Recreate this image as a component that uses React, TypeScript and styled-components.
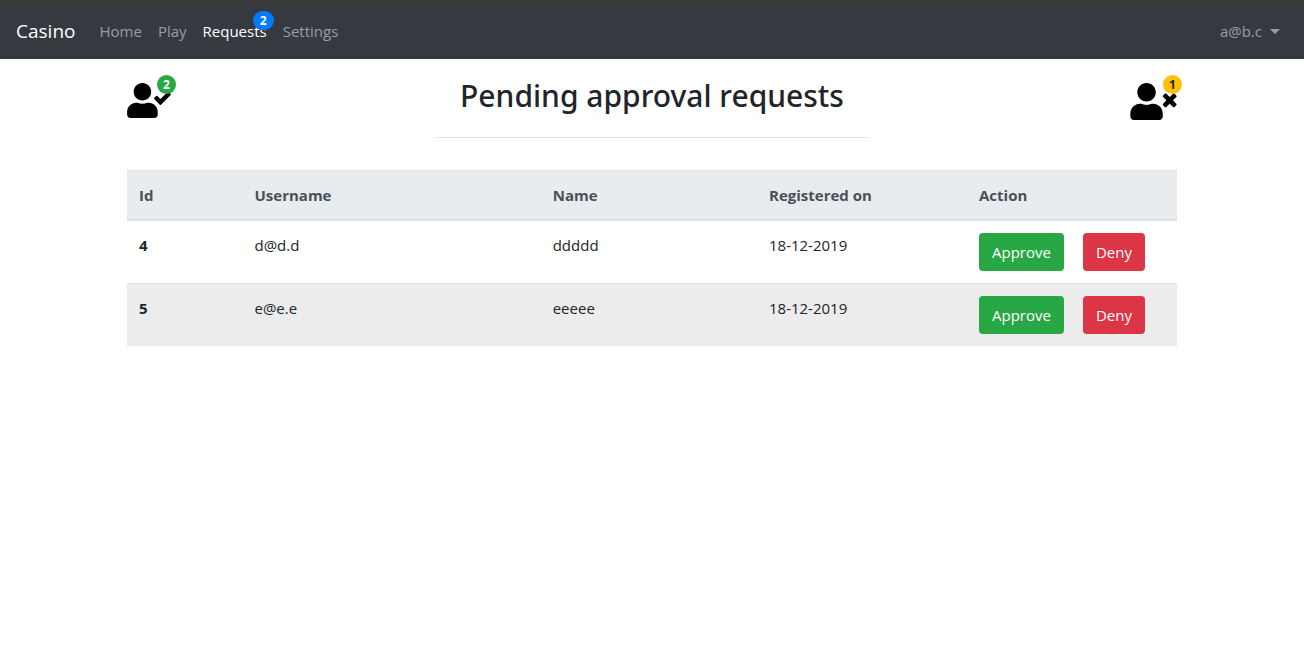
import React from "react";
import styled, { createGlobalStyle, css } from "styled-components";
import { FaUserCheck, FaUserTimes } from "react-icons/fa";

const GlobalStyle = createGlobalStyle`
  *, *::before, *::after { box-sizing: border-box; }
  body {
    margin: 0;
    background: #fff;
    color: #212529;
    font-family: "Open Sans", "Noto Sans", sans-serif;
    font-size: 15px;
    line-height: 24px;
  }
`;

const Navbar = styled.nav`
  display: flex;
  align-items: center;
  padding: 8px 24px 9px 16px;
  min-height: 59px;
  border-top: 4px solid #3a3a38;
  background: #343a40;
`;

const Brand = styled.a`
  margin-right: 24px;
  color: #fff;
  font-size: 19px;
  line-height: 30px;
  text-decoration: none;
`;

const NavList = styled.ul`
  display: flex;
  flex: 1;
  gap: 16px;
  margin: 0;
  padding: 0;
  list-style: none;
`;

const NavLink = styled.a<{ $active?: boolean }>`
  position: relative;
  color: ${(p) => (p.$active ? "#fff" : "rgba(255, 255, 255, 0.5)")};
  text-decoration: none;
`;

const tones = {
  primary: css`background: #007bff; color: #fff;`,
  success: css`background: #28a745; color: #fff;`,
  warning: css`background: #ffc107; color: #212529;`,
  danger: css`background: #dc3545; color: #fff;`,
};
type Tone = keyof typeof tones;

const Badge = styled.span<{ $tone: Tone; $wide?: boolean }>`
  position: absolute;
  top: ${(p) => (p.$wide ? "-10px" : "-8px")};
  right: ${(p) => (p.$wide ? "-7px" : "-5px")};
  width: ${(p) => (p.$wide ? "21px" : "19px")};
  height: 19px;
  border-radius: 10px;
  font-size: 12px;
  font-weight: 700;
  line-height: 19px;
  text-align: center;
  ${(p) => tones[p.$tone]}
`;

const AccountButton = styled.button`
  display: flex;
  align-items: center;
  gap: 8px;
  padding: 0;
  border: 0;
  background: none;
  color: rgba(255, 255, 255, 0.5);
  font: inherit;
`;

const Caret = styled.span`
  border-top: 5px solid;
  border-right: 5px solid transparent;
  border-left: 5px solid transparent;
`;

const Page = styled.main`
  max-width: 1082px;
  margin: 0 auto;
  padding: 16px;
`;

const PageHeader = styled.header`
  display: grid;
  grid-template-columns: 1fr minmax(auto, 432px) 1fr;
  margin-bottom: 32px;
`;

const Title = styled.h1`
  margin: 0;
  padding: 2px 0 22px;
  border-bottom: 1px solid #e5e5e5;
  font-family: "Noto Sans", "Open Sans", sans-serif;
  font-size: 30px;
  font-weight: 500;
  line-height: 38px;
  text-align: center;
`;

const IconLink = styled.a<{ $width: number; $height: number; $end?: boolean }>`
  position: relative;
  display: flex;
  justify-self: ${(p) => (p.$end ? "end" : "start")};
  align-self: start;
  margin-top: 8px;
  color: #000;

  svg {
    width: ${(p) => p.$width}px;
    height: ${(p) => p.$height}px;
  }
`;

const Table = styled.table`
  width: 100%;
  border-spacing: 0;
  table-layout: fixed;
`;

const HeadCell = styled.th<{ $width: string }>`
  width: ${(p) => p.$width};
  padding: 12px;
  border-top: 1px solid #dee2e6;
  border-bottom: 2px solid #dee2e6;
  background: #e9ecef;
  color: #495057;
  font-weight: 700;
  text-align: left;
`;

const Row = styled.tr`
  &:nth-child(even) { background: #ececec; }
  & + & > * { border-top: 1px solid #dee2e6; }
`;

const cell = css`
  padding: 12px;
  text-align: left;
  vertical-align: top;
`;
const Cell = styled.td`${cell}`;
const RowHead = styled.th`${cell} font-weight: 700;`;

const Actions = styled.div`
  display: flex;
  gap: 19px;
`;

const Button = styled.button<{ $tone: Tone }>`
  height: 38px;
  padding: 0 13px;
  border: 0;
  border-radius: 4px;
  font: inherit;
  ${(p) => tones[p.$tone]}
`;

const columns = [
  { label: "Id", width: "11%" },
  { label: "Username", width: "28.4%" },
  { label: "Name", width: "20.6%" },
  { label: "Registered on", width: "20%" },
  { label: "Action", width: "20%" },
];

const requests = [
  { id: 4, username: "d@d.d", name: "ddddd", registered: "18-12-2019" },
  { id: 5, username: "e@e.e", name: "eeeee", registered: "18-12-2019" },
];

export default function App() {
  return (
    <>
      <GlobalStyle />
      <Navbar>
        <Brand href="#">Casino</Brand>
        <NavList>
          <li><NavLink href="#home">Home</NavLink></li>
          <li><NavLink href="#play">Play</NavLink></li>
          <li>
            <NavLink href="#requests" $active>
              Requests
              <Badge $tone="primary" $wide>2</Badge>
            </NavLink>
          </li>
          <li><NavLink href="#settings">Settings</NavLink></li>
        </NavList>
        <AccountButton type="button">
          a@b.c
          <Caret />
        </AccountButton>
      </Navbar>
      <Page>
        <PageHeader>
          <IconLink href="#approved" aria-label="Approved users" $width={44} $height={35}>
            <FaUserCheck />
            <Badge $tone="success">2</Badge>
          </IconLink>
          <Title>Pending approval requests</Title>
          <IconLink href="#denied" aria-label="Denied users" $width={47} $height={37} $end>
            <FaUserTimes />
            <Badge $tone="warning">1</Badge>
          </IconLink>
        </PageHeader>
        <Table>
          <thead>
            <tr>
              {columns.map((c) => (
                <HeadCell key={c.label} scope="col" $width={c.width}>{c.label}</HeadCell>
              ))}
            </tr>
          </thead>
          <tbody>
            {requests.map((r) => (
              <Row key={r.id}>
                <RowHead scope="row">{r.id}</RowHead>
                <Cell>{r.username}</Cell>
                <Cell>{r.name}</Cell>
                <Cell>{r.registered}</Cell>
                <Cell>
                  <Actions>
                    <Button type="button" $tone="success">Approve</Button>
                    <Button type="button" $tone="danger">Deny</Button>
                  </Actions>
                </Cell>
              </Row>
            ))}
          </tbody>
        </Table>
      </Page>
    </>
  );
}
